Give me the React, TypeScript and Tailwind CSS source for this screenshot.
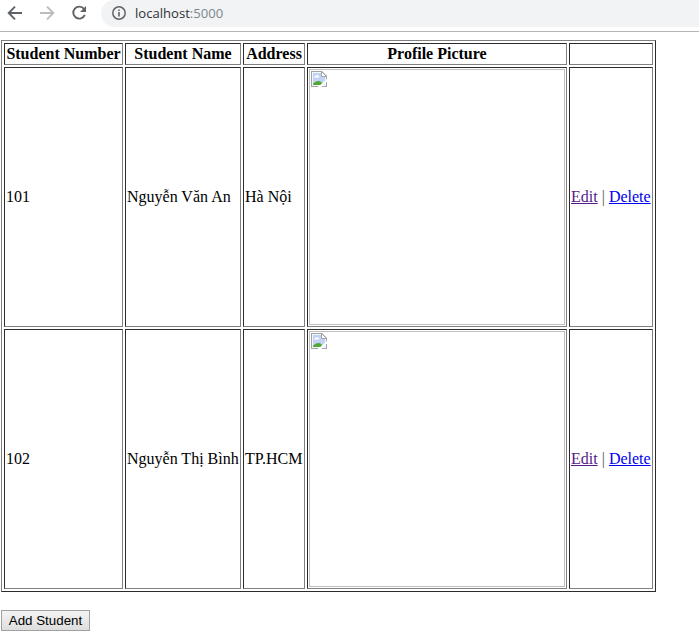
import type { ReactNode } from "react";

const students = [
  { id: 101, name: "Nguyễn Văn An", address: "Hà Nội" },
  { id: 102, name: "Nguyễn Thị Bình", address: "TP.HCM" },
];

const cell =
  "border border-t-[#2c2c2c] border-l-[#2c2c2c] border-r-[#808080] border-b-[#808080] p-px whitespace-nowrap";

function Th({ children }: { children?: ReactNode }) {
  return <th className={`${cell} h-[22px] text-center font-bold`}>{children}</th>;
}

function Td({ children }: { children?: ReactNode }) {
  return <td className={`${cell} h-[260px] text-left align-middle`}>{children}</td>;
}

function BrokenImage() {
  return (
    <div className="h-[256px] w-[256px] border border-[#c0c0c0] p-px">
      <svg width="16" height="16" viewBox="0 0 16 16" className="block">
        <path d="M0 0h11l5 5v11H0z" fill="#a3a3a3" />
        <path d="M1 1h10l4 4.500V15H1z" fill="#f4f7fd" />
        <path d="M2 2h8.500v4H14v8H2z" fill="#c1d3f5" />
        <path d="M3 6.500C2.800 5.400 3.800 4.800 4.600 5 5 3.500 7 3.500 7.400 5c1.200 0 1.400 1.500.3 1.500z" fill="#fff" />
        <path d="M2 14v-1c1.500-2 3.500-3 5.500-3S11 11 12 14z" fill="#52a835" />
        <path d="M10.500.5v5h5z" fill="#fff" stroke="#a3a3a3" />
        <path d="M16 8v3l-5 5H6.500l3-2.200z" fill="#fff" />
        <path d="M15.500 11v4.500H11" fill="none" stroke="#a3a3a3" />
      </svg>
    </div>
  );
}

function Toolbar() {
  return (
    <header className="flex h-8 items-start border-b border-[#b3b4b6] bg-white">
      <svg width="100" height="27" viewBox="0 0 100 27" fill="none" strokeWidth="1.900">
        <path d="M22 13H9M15 6.700 8.700 13l6.300 6.300" stroke="#5f6368" />
        <path d="M40 13h13M47 6.700l6.300 6.300-6.300 6.300" stroke="#babcbe" />
        <path d="M84 8.900a6 6 0 1 0 .8 6" stroke="#5f6368" />
        <path d="M86 6v6h-6z" fill="#5f6368" />
      </svg>
      <div className="ml-px flex h-[27px] flex-1 items-start rounded-l-full bg-[#f1f3f4] pt-[5px] pl-[11px]">
        <svg width="14" height="14" viewBox="0 0 14 14" fill="none" className="mt-px">
          <circle cx="7" cy="7" r="6.200" stroke="#5f6368" strokeWidth="1.500" />
          <path d="M7 6v4.500M7 3.500V5" stroke="#5f6368" strokeWidth="1.600" />
        </svg>
        <span className="ml-[9px] font-['Open_Sans',sans-serif] text-[13.100px] leading-4 text-[#303236]">
          localhost<span className="text-[#80868b]">:5000</span>
        </span>
      </div>
    </header>
  );
}

export default function App() {
  return (
    <div className="h-[641px] w-[699px] overflow-hidden bg-white font-['Liberation_Serif',serif] text-[16px] leading-[18px] text-black">
      <Toolbar />
      <main className="pt-2 pl-px">
        <table className="w-[655px] table-fixed border-separate border-spacing-[2px] border border-t-[#808080] border-r-[#2c2c2c] border-b-[#2c2c2c] border-l-[#808080]">
          <colgroup>
            <col className="w-[119px]" />
            <col className="w-[116px]" />
            <col className="w-[62px]" />
            <col className="w-[260px]" />
            <col className="w-[84px]" />
          </colgroup>
          <thead>
            <tr>
              <Th>Student Number</Th>
              <Th>Student Name</Th>
              <Th>Address</Th>
              <Th>Profile Picture</Th>
              <Th />
            </tr>
          </thead>
          <tbody>
            {students.map((s) => (
              <tr key={s.id}>
                <Td>{s.id}</Td>
                <Td>{s.name}</Td>
                <Td>{s.address}</Td>
                <Td>
                  <BrokenImage />
                </Td>
                <Td>
                  <a href="#" className="text-[#551a8b] underline">Edit</a>
                  <span className="text-[#5c5c50]"> | </span>
                  <a href="#" className="text-[#0000ee] underline">Delete</a>
                </Td>
              </tr>
            ))}
          </tbody>
        </table>
        <button className="mt-[18px] block h-[21px] w-[89px] border border-[#a0a0a0] bg-linear-to-b from-[#f4f4f4] to-[#dddddd] font-['Liberation_Sans',sans-serif] text-[13.333px] leading-[19px] whitespace-nowrap">
          Add Student
        </button>
      </main>
    </div>
  );
}
